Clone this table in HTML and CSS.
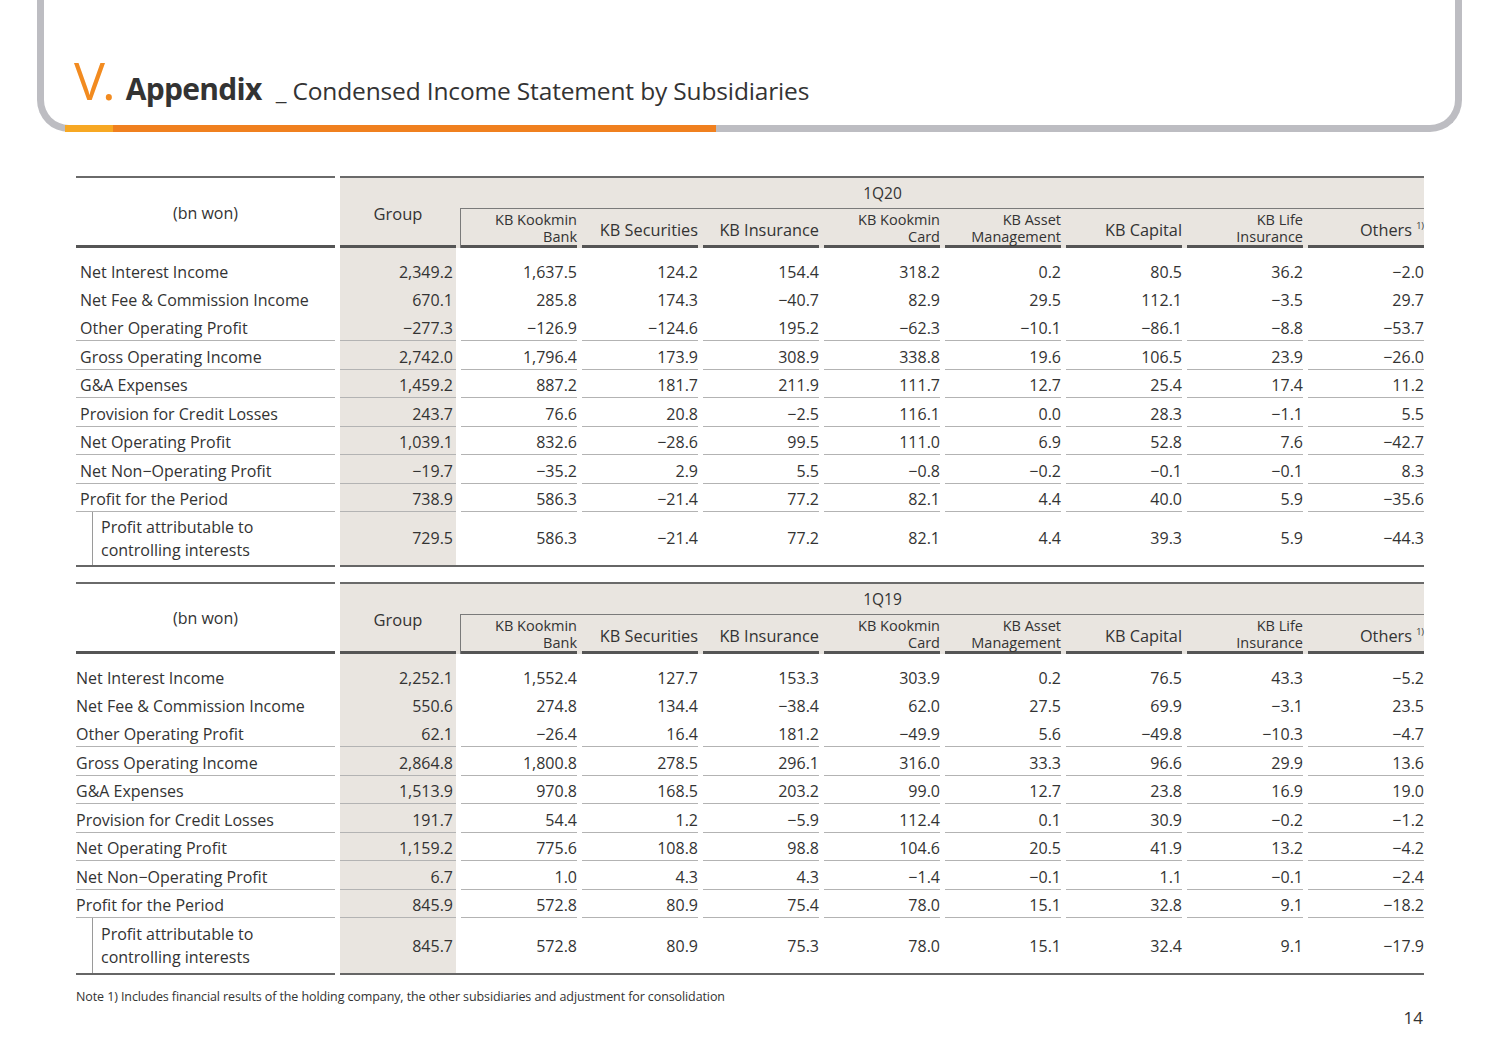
FILE: index.html
```html
<!DOCTYPE html>
<html lang="en">
<head>
<meta charset="utf-8">
<title>Condensed Income Statement by Subsidiaries</title>
<link rel="stylesheet" href="styles.css">
</head>
<body>
<div class="frame">
  <h1 class="title"><span class="t-num">V.</span><span class="t-main">Appendix</span><span class="t-sub">_ Condensed Income Statement by Subsidiaries</span></h1>
</div>

<main class="content">
  <section class="tbl t1">
    <div class="thead">
      <div class="th-label">(bn won)</div>
      <div class="th-data">
        <div class="th-period">1Q20</div>
        <div class="th-group">Group</div>
        <div class="th-cols">
          <div class="th-col two"><span>KB Kookmin</span><span>Bank</span></div>
          <div class="th-col one"><span>KB Securities</span></div>
          <div class="th-col one"><span>KB Insurance</span></div>
          <div class="th-col two"><span>KB Kookmin</span><span>Card</span></div>
          <div class="th-col two"><span>KB Asset</span><span>Management</span></div>
          <div class="th-col one"><span>KB Capital</span></div>
          <div class="th-col two"><span>KB Life</span><span>Insurance</span></div>
          <div class="th-col one"><span>Others <sup>1)</sup></span></div>
        </div>
      </div>
    </div>
    <div class="tbody">
      <div class="row first"><div class="c-label">Net Interest Income</div><div class="c-group">2,349.2</div><div class="c">1,637.5</div><div class="c">124.2</div><div class="c">154.4</div><div class="c">318.2</div><div class="c">0.2</div><div class="c">80.5</div><div class="c">36.2</div><div class="c">−2.0</div></div>
      <div class="row"><div class="c-label">Net Fee &amp; Commission Income</div><div class="c-group">670.1</div><div class="c">285.8</div><div class="c">174.3</div><div class="c">−40.7</div><div class="c">82.9</div><div class="c">29.5</div><div class="c">112.1</div><div class="c">−3.5</div><div class="c">29.7</div></div>
      <div class="row lined"><div class="c-label">Other Operating Profit</div><div class="c-group">−277.3</div><div class="c">−126.9</div><div class="c">−124.6</div><div class="c">195.2</div><div class="c">−62.3</div><div class="c">−10.1</div><div class="c">−86.1</div><div class="c">−8.8</div><div class="c">−53.7</div></div>
      <div class="row lined"><div class="c-label">Gross Operating Income</div><div class="c-group">2,742.0</div><div class="c">1,796.4</div><div class="c">173.9</div><div class="c">308.9</div><div class="c">338.8</div><div class="c">19.6</div><div class="c">106.5</div><div class="c">23.9</div><div class="c">−26.0</div></div>
      <div class="row lined"><div class="c-label">G&amp;A Expenses</div><div class="c-group">1,459.2</div><div class="c">887.2</div><div class="c">181.7</div><div class="c">211.9</div><div class="c">111.7</div><div class="c">12.7</div><div class="c">25.4</div><div class="c">17.4</div><div class="c">11.2</div></div>
      <div class="row lined"><div class="c-label">Provision for Credit Losses</div><div class="c-group">243.7</div><div class="c">76.6</div><div class="c">20.8</div><div class="c">−2.5</div><div class="c">116.1</div><div class="c">0.0</div><div class="c">28.3</div><div class="c">−1.1</div><div class="c">5.5</div></div>
      <div class="row lined"><div class="c-label">Net Operating Profit</div><div class="c-group">1,039.1</div><div class="c">832.6</div><div class="c">−28.6</div><div class="c">99.5</div><div class="c">111.0</div><div class="c">6.9</div><div class="c">52.8</div><div class="c">7.6</div><div class="c">−42.7</div></div>
      <div class="row lined"><div class="c-label">Net Non−Operating Profit</div><div class="c-group">−19.7</div><div class="c">−35.2</div><div class="c">2.9</div><div class="c">5.5</div><div class="c">−0.8</div><div class="c">−0.2</div><div class="c">−0.1</div><div class="c">−0.1</div><div class="c">8.3</div></div>
      <div class="row lined"><div class="c-label">Profit for the Period</div><div class="c-group">738.9</div><div class="c">586.3</div><div class="c">−21.4</div><div class="c">77.2</div><div class="c">82.1</div><div class="c">4.4</div><div class="c">40.0</div><div class="c">5.9</div><div class="c">−35.6</div></div>
      <div class="row last"><div class="c-label"><div class="sub-label">Profit attributable to<br>controlling interests</div></div><div class="c-group">729.5</div><div class="c">586.3</div><div class="c">−21.4</div><div class="c">77.2</div><div class="c">82.1</div><div class="c">4.4</div><div class="c">39.3</div><div class="c">5.9</div><div class="c">−44.3</div></div>
    </div>
    <div class="tfoot"><div class="f-label"></div><div class="f-data"></div></div>
  </section>

  <section class="tbl t2">
    <div class="thead">
      <div class="th-label">(bn won)</div>
      <div class="th-data">
        <div class="th-period">1Q19</div>
        <div class="th-group">Group</div>
        <div class="th-cols">
          <div class="th-col two"><span>KB Kookmin</span><span>Bank</span></div>
          <div class="th-col one"><span>KB Securities</span></div>
          <div class="th-col one"><span>KB Insurance</span></div>
          <div class="th-col two"><span>KB Kookmin</span><span>Card</span></div>
          <div class="th-col two"><span>KB Asset</span><span>Management</span></div>
          <div class="th-col one"><span>KB Capital</span></div>
          <div class="th-col two"><span>KB Life</span><span>Insurance</span></div>
          <div class="th-col one"><span>Others <sup>1)</sup></span></div>
        </div>
      </div>
    </div>
    <div class="tbody">
      <div class="row first"><div class="c-label">Net Interest Income</div><div class="c-group">2,252.1</div><div class="c">1,552.4</div><div class="c">127.7</div><div class="c">153.3</div><div class="c">303.9</div><div class="c">0.2</div><div class="c">76.5</div><div class="c">43.3</div><div class="c">−5.2</div></div>
      <div class="row"><div class="c-label">Net Fee &amp; Commission Income</div><div class="c-group">550.6</div><div class="c">274.8</div><div class="c">134.4</div><div class="c">−38.4</div><div class="c">62.0</div><div class="c">27.5</div><div class="c">69.9</div><div class="c">−3.1</div><div class="c">23.5</div></div>
      <div class="row lined"><div class="c-label">Other Operating Profit</div><div class="c-group">62.1</div><div class="c">−26.4</div><div class="c">16.4</div><div class="c">181.2</div><div class="c">−49.9</div><div class="c">5.6</div><div class="c">−49.8</div><div class="c">−10.3</div><div class="c">−4.7</div></div>
      <div class="row lined"><div class="c-label">Gross Operating Income</div><div class="c-group">2,864.8</div><div class="c">1,800.8</div><div class="c">278.5</div><div class="c">296.1</div><div class="c">316.0</div><div class="c">33.3</div><div class="c">96.6</div><div class="c">29.9</div><div class="c">13.6</div></div>
      <div class="row lined"><div class="c-label">G&amp;A Expenses</div><div class="c-group">1,513.9</div><div class="c">970.8</div><div class="c">168.5</div><div class="c">203.2</div><div class="c">99.0</div><div class="c">12.7</div><div class="c">23.8</div><div class="c">16.9</div><div class="c">19.0</div></div>
      <div class="row lined"><div class="c-label">Provision for Credit Losses</div><div class="c-group">191.7</div><div class="c">54.4</div><div class="c">1.2</div><div class="c">−5.9</div><div class="c">112.4</div><div class="c">0.1</div><div class="c">30.9</div><div class="c">−0.2</div><div class="c">−1.2</div></div>
      <div class="row lined"><div class="c-label">Net Operating Profit</div><div class="c-group">1,159.2</div><div class="c">775.6</div><div class="c">108.8</div><div class="c">98.8</div><div class="c">104.6</div><div class="c">20.5</div><div class="c">41.9</div><div class="c">13.2</div><div class="c">−4.2</div></div>
      <div class="row lined"><div class="c-label">Net Non−Operating Profit</div><div class="c-group">6.7</div><div class="c">1.0</div><div class="c">4.3</div><div class="c">4.3</div><div class="c">−1.4</div><div class="c">−0.1</div><div class="c">1.1</div><div class="c">−0.1</div><div class="c">−2.4</div></div>
      <div class="row lined"><div class="c-label">Profit for the Period</div><div class="c-group">845.9</div><div class="c">572.8</div><div class="c">80.9</div><div class="c">75.4</div><div class="c">78.0</div><div class="c">15.1</div><div class="c">32.8</div><div class="c">9.1</div><div class="c">−18.2</div></div>
      <div class="row last"><div class="c-label"><div class="sub-label">Profit attributable to<br>controlling interests</div></div><div class="c-group">845.7</div><div class="c">572.8</div><div class="c">80.9</div><div class="c">75.3</div><div class="c">78.0</div><div class="c">15.1</div><div class="c">32.4</div><div class="c">9.1</div><div class="c">−17.9</div></div>
    </div>
    <div class="tfoot"><div class="f-label"></div><div class="f-data"></div></div>
  </section>

  <p class="note">Note 1) Includes financial results of the holding company, the other subsidiaries and adjustment for consolidation</p>
  <div class="page-num">14</div>
</main>
</body>
</html>
```

FILE: styles.css
```css
* { box-sizing: border-box; }
html, body { margin: 0; padding: 0; background: #ffffff; }
body {
  width: 1499px;
  height: 1060px;
  overflow: hidden;
  font-family: "Open Sans", "Noto Sans", sans-serif;
  color: #333333;
}

/* ---------- title frame ---------- */
.frame {
  position: relative;
  height: 132px;
  margin: 0 37px;
  border: 7px solid #bdbdc2;
  border-top: 0;
  border-radius: 0 0 32px 32px;
}
.frame::after {
  content: "";
  position: absolute;
  left: 21px;
  bottom: -7px;
  width: 651px;
  height: 7px;
  background: linear-gradient(90deg, #f7a823 0 48px, #f0801f 48px 100%);
}
.title {
  margin: 0;
  padding: 54px 0 0 30px;
  display: flex;
  align-items: baseline;
  line-height: 1;
  font-weight: 400;
  white-space: nowrap;
}
.t-num {
  font-size: 52px;
  color: #f28b20;
  letter-spacing: -3px;
  margin-right: 13px;
}
.t-main {
  font-size: 30px;
  font-weight: 700;
  color: #333;
  letter-spacing: -0.7px;
  margin-right: 14px;
}
.t-sub {
  font-size: 24.5px;
  color: #333;
  letter-spacing: -0.15px;
}

/* ---------- tables ---------- */
.content {
  padding: 44px 0 0 76px;
  width: 1424px;
}
.tbl + .tbl { margin-top: 15px; }

.thead {
  display: flex;
  gap: 5px;
  height: 72px;
}
.th-label {
  width: 259px;
  border-top: 2px solid #6a6a6a;
  border-bottom: 3px solid #555;
  display: flex;
  align-items: center;
  justify-content: center;
  font-size: 16px;
  padding-top: 2px;
}
.t2 .th-label { padding-top: 0; }
.th-data {
  width: 1084px;
  background: #e9e5e0;
  border-top: 2px solid #6a6a6a;
  display: grid;
  grid-template-columns: 116px 5px 963px;
  grid-template-rows: 30px 40px;
}
.th-period {
  grid-column: 1 / -1;
  grid-row: 1;
  text-align: center;
  font-size: 15.5px;
  line-height: 30px;
  padding-top: 0;
  padding-left: 1px;
}
.th-group {
  grid-column: 1;
  grid-row: 1 / 3;
  border-bottom: 3px solid #555;
  display: flex;
  align-items: center;
  justify-content: center;
  font-size: 16.5px;
  padding-top: 3px;
}
.th-cols {
  grid-column: 3;
  grid-row: 2;
  display: grid;
  grid-template-columns: repeat(8, 116px);
  column-gap: 5px;
  border-top: 1px solid #7a7a7a;
  border-left: 1px solid #7a7a7a;
  margin-left: -1px;
}
.th-col {
  border-bottom: 3px solid #555;
  display: flex;
  flex-direction: column;
  justify-content: flex-end;
  align-items: flex-end;
  text-align: right;
  background: #e9e5e0;
  white-space: nowrap;
}
.th-col.two {
  font-size: 14.5px;
  line-height: 17px;
  padding-bottom: 0;
}
.th-col.one {
  font-size: 16.3px;
  line-height: 20px;
  padding-bottom: 5px;
}
.th-col sup {
  font-size: 9px;
  vertical-align: 7px;
  line-height: 0;
}

.row {
  display: grid;
  grid-template-columns: 259px 116px repeat(8, 116px);
  column-gap: 5px;
  height: 28.5px;
  font-size: 16px;
}
.row.first { height: 36px; }
.row.first > div { padding-top: 12px; }
.row > div {
  display: flex;
  align-items: center;
  justify-content: flex-end;
  padding-top: 4px;
  white-space: nowrap;
}
.row.lined > div { border-bottom: 1px solid #b3b3b3; }
.row .c-label {
  justify-content: flex-start;
  padding-left: 4px;
}
.t2 .row .c-label { padding-left: 0; }
.row .c-group {
  background: #e9e5e0;
  padding-right: 3px;
}
.row.last { height: 53px; }
.t2 .row.last { height: 55px; }
.row.last > div { padding-top: 0; padding-bottom: 2px; }
.t2 .row.last > div { padding-bottom: 0; }
.row.last .c-label { padding-left: 16px; padding-bottom: 0; }
.t2 .row.last .c-label { padding-left: 16px; }
.sub-label {
  border-left: 1px solid #9a9a9a;
  height: 100%;
  padding: 1px 0 0 8px;
  line-height: 23px;
  display: flex;
  align-items: center;
}

.tfoot {
  display: flex;
  gap: 5px;
  height: 2px;
}
.f-label { width: 259px; background: #666; }
.f-data { width: 1084px; background: #666; }

.note {
  margin: 13px 0 0 0;
  font-size: 12.5px;
  letter-spacing: -0.1px;
  color: #333;
  white-space: nowrap;
}
.page-num {
  margin: 1px 0 0 0;
  width: 1347px;
  text-align: right;
  font-size: 17px;
  color: #333;
}
```
